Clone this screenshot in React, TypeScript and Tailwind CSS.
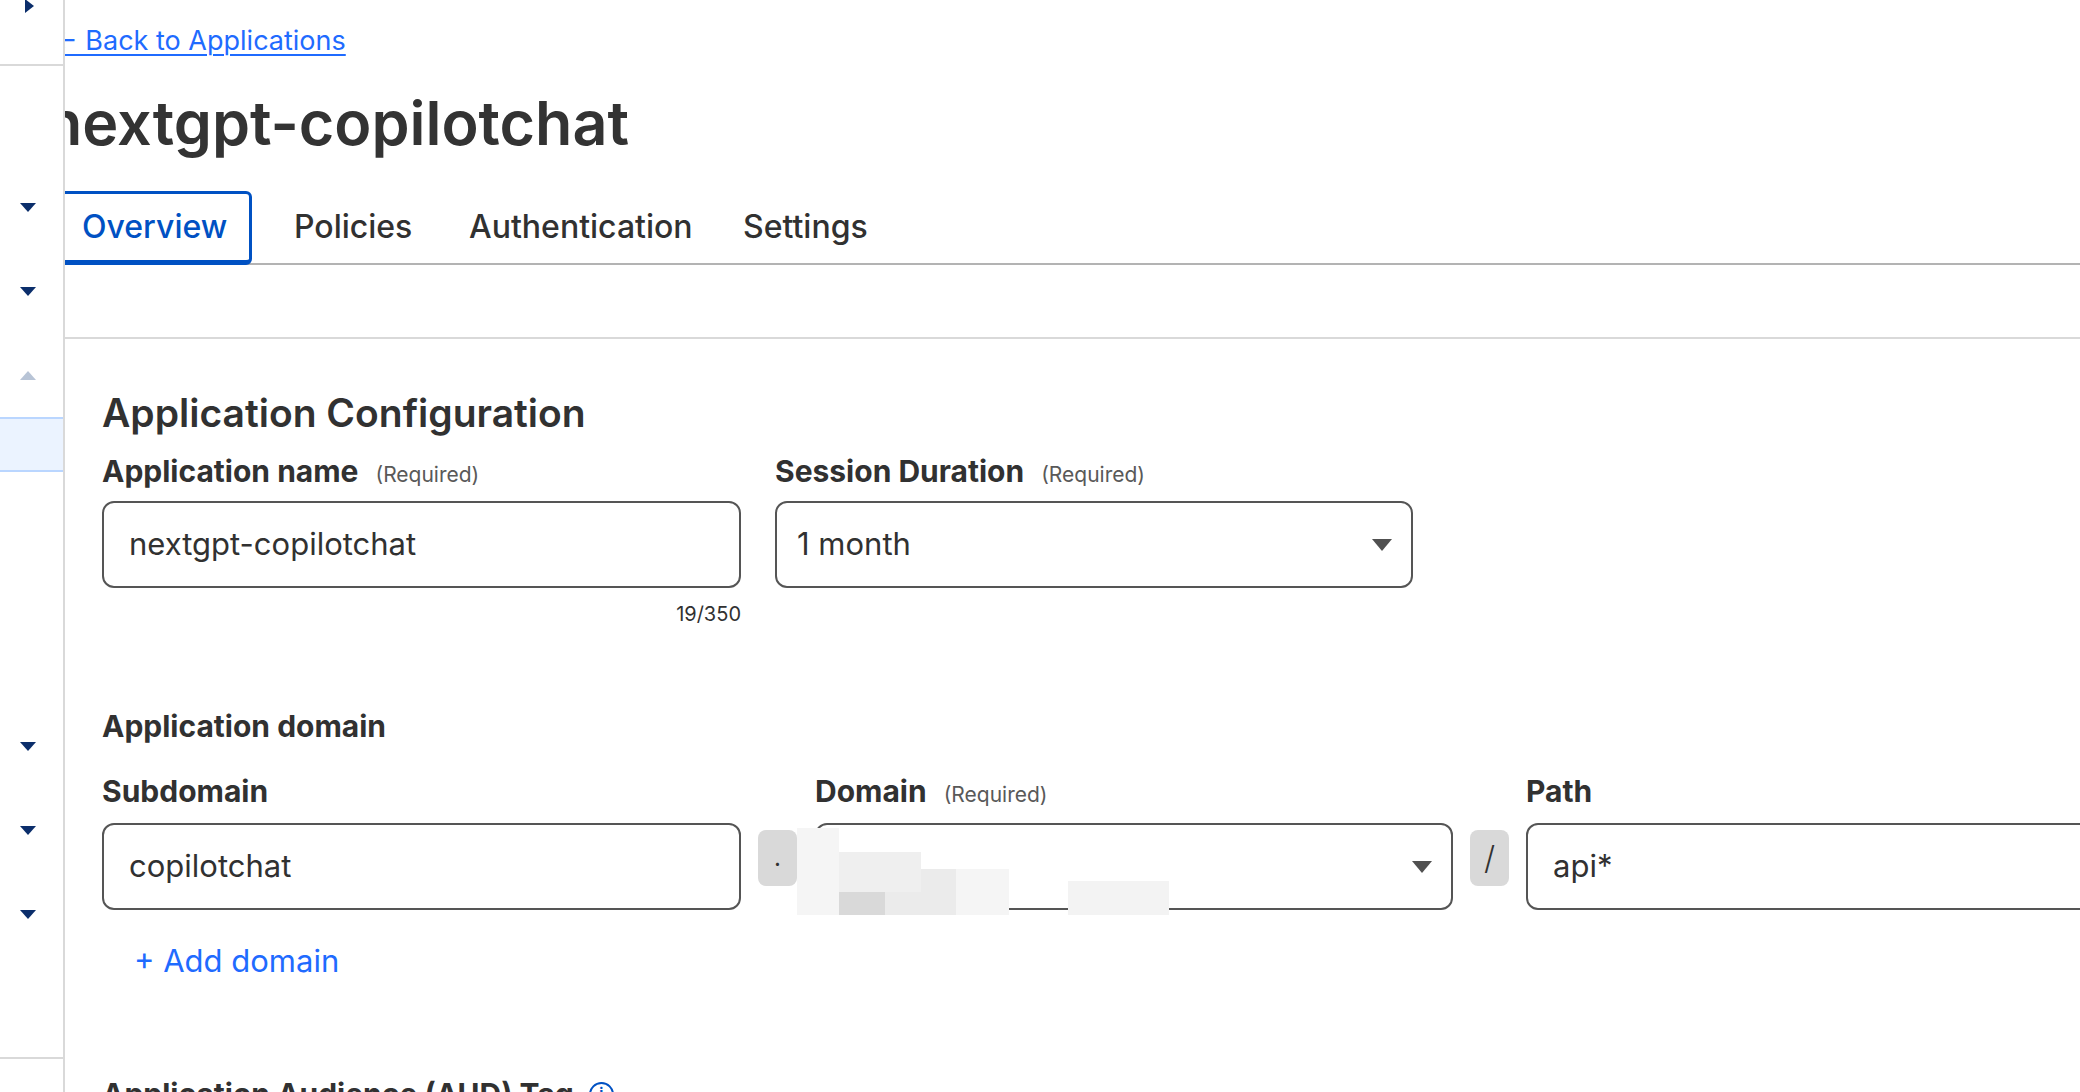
import React from "react";

const Down = ({ color = "#0b2e6b" }: { color?: string }) => (
  <svg width="16" height="9" viewBox="0 0 16 9">
    <polygon points="0,0 16,0 8,9" fill={color} />
  </svg>
);
const Up = ({ color = "#b8c4d6" }: { color?: string }) => (
  <svg width="16" height="9" viewBox="0 0 16 9">
    <polygon points="0,9 16,9 8,0" fill={color} />
  </svg>
);
const Caret = () => (
  <svg width="20" height="12" viewBox="0 0 20 12">
    <polygon points="0,0 20,0 10,12" fill="#505050" />
  </svg>
);

const Req = () => (
  <span className="ml-[17px] text-[21px] font-normal text-[#595959]">(Required)</span>
);

function Sidebar() {
  return (
    <aside className="relative z-10 flex h-[1092px] w-[65px] shrink-0 flex-col border-r-2 border-[#d9d9d9] bg-white">
      <div className="h-[66px] border-b-2 border-[#d9d9d9] pl-[25px]">
        <svg width="9" height="14" viewBox="0 0 9 14" className="-mt-[1px]">
          <polygon points="0,0 9,7 0,14" fill="#0b2e6b" />
        </svg>
      </div>
      <div className="h-[99px]" />
      <div className="flex h-[84px] items-center pl-[20px]"><Down /></div>
      <div className="flex h-[84px] items-center pl-[20px]"><Down /></div>
      <div className="flex h-[84px] items-center pl-[20px]"><Up /></div>
      <div className="h-[55px] border-y-2 border-[#bad6ff] bg-[#ebf3ff]" />
      <div className="h-[232px]" />
      <div className="flex h-[84px] items-center pl-[20px]"><Down /></div>
      <div className="flex h-[84px] items-center pl-[20px]"><Down /></div>
      <div className="flex h-[84px] items-center pl-[20px]"><Down /></div>
      <div className="h-[103px] border-b-2 border-[#d9d9d9]" />
    </aside>
  );
}

function Pixels() {
  return (
    <>
      <div className="absolute left-[-18px] top-[55px] h-[87px] w-[42px] bg-[#f5f5f5]" />
      <div className="absolute left-[70px] top-[96px] h-[46px] w-[71px] bg-[#ebebeb]" />
      <div className="absolute left-[24px] top-[79px] h-[40px] w-[82px] bg-[#efefef]" />
      <div className="absolute left-[24px] top-[119px] h-[23px] w-[46px] bg-[#d9d9d9]" />
      <div className="absolute left-[141px] top-[96px] h-[46px] w-[53px] bg-[#f5f5f5]" />
      <div className="absolute left-[253px] top-[108px] h-[34px] w-[101px] bg-[#f3f3f3]" />
    </>
  );
}

export default function App() {
  return (
    <div
      className="flex h-[1092px] w-[2080px] overflow-hidden bg-white text-[#313131]"
      style={{ fontFamily: "Inter, 'Noto Sans', sans-serif" }}
    >
      <Sidebar />
      <main className="-ml-[20px] min-w-0 flex-1 pt-[23px]">
        <div className="h-[36px] pl-[7px]">
          <a href="#" className="text-[27px] leading-[36px] text-[#1f6bff] underline decoration-[2px] underline-offset-[4px]">
            ← Back to Applications
          </a>
        </div>
        <h1 className="mt-[28px] text-[61px] font-semibold leading-[72px] text-[#333333]">
          nextgpt-copilotchat
        </h1>
        <div className="mt-[32px] flex h-[74px] items-start border-b-2 border-[#b3b3b3]">
          <div className="ml-[8px] flex h-[74px] w-[199px] shrink-0 items-center rounded-[6px] border-[3px] border-b-[5px] border-[#0051c3] pl-[26px] text-[32px] font-medium text-[#0051c3]">
            Overview
          </div>
          <div className="ml-[12px] flex h-[72px] w-[175px] shrink-0 items-center pl-[30px] text-[32px] font-medium">
            Policies
          </div>
          <div className="flex h-[72px] w-[274px] shrink-0 items-center pl-[30px] text-[32px] font-medium">
            Authentication
          </div>
          <div className="flex h-[72px] shrink-0 items-center pl-[30px] text-[32px] font-medium">
            Settings
          </div>
        </div>
        <div className="h-[74px] border-b-2 border-[#d9d9d9] bg-white" />

        <section className="pl-[57px] pt-[54px]">
          <h2 className="text-[39px] font-semibold leading-[40px]">Application Configuration</h2>
          <div className="mt-[20px] flex gap-[34px]">
            <div className="w-[639px] shrink-0">
              <div className="flex h-[36px] items-baseline text-[30px] font-bold leading-[36px]">
                Application name <Req />
              </div>
              <div className="mt-[12px] flex h-[87px] items-center rounded-[12px] border-2 border-[#555555] px-[25px] text-[31px]">
                nextgpt-copilotchat
              </div>
              <div className="mt-[14px] text-right text-[20px] leading-[24px]">19/350</div>
            </div>
            <div className="w-[638px] shrink-0">
              <div className="flex h-[36px] items-baseline text-[30px] font-bold leading-[36px]">
                Session Duration <Req />
              </div>
              <div className="mt-[12px] flex h-[87px] items-center justify-between rounded-[12px] border-2 border-[#555555] pl-[20px] pr-[19px] text-[31px]">
                <span>1 month</span>
                <Caret />
              </div>
            </div>
          </div>

          <h3 className="mt-[82px] text-[30px] font-bold leading-[36px]">Application domain</h3>
          <div className="mt-[29px] flex items-start">
            <div className="w-[639px] shrink-0">
              <div className="h-[36px] text-[30px] font-bold leading-[36px]">Subdomain</div>
              <div className="mt-[14px] flex h-[87px] items-center rounded-[12px] border-2 border-[#555555] px-[25px] text-[31px]">
                copilotchat
              </div>
            </div>
            <div className="ml-[17px] mt-[57px] flex h-[56px] w-[39px] shrink-0 items-center justify-center rounded-[8px] bg-[#d9d9d9] text-[24px]">
              .
            </div>
            <div className="relative ml-[18px] w-[638px] shrink-0">
              <div className="flex h-[36px] items-baseline text-[30px] font-bold leading-[36px]">
                Domain <Req />
              </div>
              <div className="mt-[14px] flex h-[87px] items-center justify-end rounded-[12px] border-2 border-[#555555] pr-[19px]">
                <Caret />
              </div>
              <Pixels />
            </div>
            <div className="ml-[17px] mt-[57px] flex h-[56px] w-[39px] shrink-0 items-center justify-center rounded-[8px] bg-[#d9d9d9] text-[32px] font-light">
              /
            </div>
            <div className="ml-[17px] w-[700px] shrink-0">
              <div className="h-[36px] text-[30px] font-bold leading-[36px]">Path</div>
              <div className="mt-[14px] flex h-[87px] items-center rounded-[12px] border-2 border-[#555555] px-[25px] text-[31px]">
                api*
              </div>
            </div>
          </div>

          <div className="mt-[31px] pl-[32px] text-[31px] leading-[40px] text-[#1f6bff]">+ Add domain</div>

          <div className="mt-[93px] flex items-center gap-[15px]">
            <h3 className="text-[30px] font-bold leading-[40px]">Application Audience (AUD) Tag</h3>
            <div className="flex h-[25px] w-[25px] items-center justify-center rounded-full border-2 border-[#0051c3] text-[15px] font-bold text-[#0051c3]">
              i
            </div>
          </div>
        </section>
      </main>
    </div>
  );
}
